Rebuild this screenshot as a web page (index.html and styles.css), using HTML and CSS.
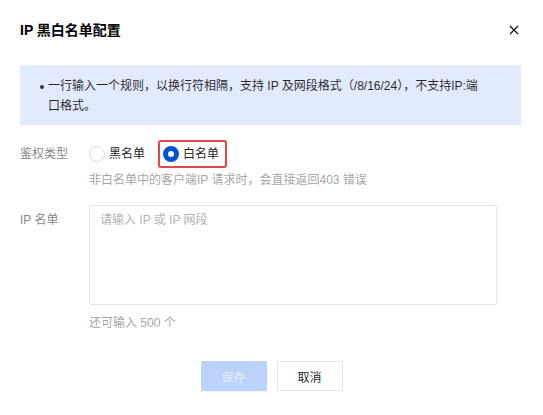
FILE: index.html
```html
<!DOCTYPE html>
<html lang="zh-CN">
<head>
<meta charset="utf-8">
<title>IP 黑白名单配置</title>
<link rel="stylesheet" href="styles.css">
</head>
<body>
<div class="dialog">
  <div class="dialog-header">
    <div class="dialog-title">IP 黑白名单配置</div>
    <button class="dialog-close" aria-label="关闭">
      <svg width="10" height="10" viewBox="0 0 10 10"><path d="M1 1L9 9M9 1L1 9" stroke="#1a1a1a" stroke-width="1.4" fill="none"/></svg>
    </button>
  </div>
  <div class="alert">
    <ul class="alert-list">
      <li>一行输入一个规则，以换行符相隔，支持 IP 及网段格式（/8/16/24），不支持IP:端口格式。</li>
    </ul>
  </div>
  <div class="form">
    <div class="form-item">
      <div class="form-label form-label-radio">鉴权类型</div>
      <div class="form-control">
        <div class="radio-group">
          <label class="radio"><span class="radio-dot"></span><span class="radio-text">黑名单</span></label>
          <label class="radio radio-checked highlight"><span class="radio-dot"></span><span class="radio-text">白名单</span></label>
        </div>
        <div class="help">非白名单中的客户端IP 请求时，会直接返回403 错误</div>
      </div>
    </div>
    <div class="form-item form-item-textarea">
      <div class="form-label form-label-text">IP 名单</div>
      <div class="form-control">
        <div class="textarea"><span class="placeholder">请输入 IP 或 IP 网段</span></div>
        <div class="help help-count">还可输入 500 个</div>
      </div>
    </div>
  </div>
  <div class="dialog-footer">
    <button class="btn btn-primary">保存</button>
    <button class="btn btn-default">取消</button>
  </div>
</div>
</body>
</html>
```

FILE: styles.css
```css
* { box-sizing: border-box; }
html, body { margin: 0; padding: 0; background: #fff; }
body {
  font-family: "Liberation Sans", "Noto Sans CJK SC", sans-serif;
  font-size: 12px;
  color: rgba(0,0,0,0.9);
}
.dialog {
  width: 543px;
  height: 415px;
  padding: 0 22px 0 20px;
}
.dialog-header {
  height: 60px;
  display: flex;
  align-items: center;
  justify-content: space-between;
}
.dialog-title {
  font-size: 14px;
  font-weight: bold;
  line-height: 20px;
  color: #000;
}
.dialog-close {
  border: 0;
  background: none;
  padding: 0;
  width: 10px;
  height: 10px;
  display: flex;
  margin-right: 2px;
}
.alert {
  margin-top: 5px;
  width: 501px;
  background: #e2eafd;
  padding: 11px 10px 9px 20px;
}
.alert-list {
  margin: 0;
  padding: 0 0 0 8px;
  width: 447px;
  list-style: none;
}
.alert-list li {
  position: relative;
  line-height: 20px;
  color: rgba(0,0,0,0.85);
  padding-left: 0;
}
.alert-list li::before {
  content: "";
  position: absolute;
  left: -8px;
  top: 9px;
  width: 4px;
  height: 4px;
  border-radius: 50%;
  background: #333;
}
.form {
  margin-top: 15px;
}
.form-item {
  display: flex;
}
.form-label {
  width: 69px;
  flex: none;
  color: #888;
}
.form-label-radio {
  line-height: 28px;
}
.form-label-text {
  line-height: 20px;
  padding-top: 5px;
}
.form-control {
  flex: 1;
}
.radio-group {
  display: flex;
  height: 28px;
  align-items: center;
  gap: 18px;
}
.radio {
  position: relative;
  display: flex;
  align-items: center;
  gap: 4px;
  line-height: 20px;
  color: rgba(0,0,0,0.9);
}
.radio-dot {
  width: 16px;
  height: 16px;
  border-radius: 50%;
  border: 1px solid #dcdcdc;
  background: #fff;
}
.radio-checked .radio-dot {
  border: 5px solid #0052d9;
}
.highlight::after {
  content: "";
  position: absolute;
  left: -5px;
  right: -8px;
  top: -4px;
  bottom: -4px;
  border: 2px solid #e54545;
  border-radius: 3px;
}
.help {
  color: #a6a6a6;
  line-height: 16px;
  margin-top: 4px;
}
.form-item-textarea {
  margin-top: 17px;
}
.textarea {
  width: 408px;
  height: 100px;
  border: 1px solid #e3e3ea;
  border-radius: 2px;
  padding: 4px 10px;
  line-height: 20px;
}
.placeholder {
  color: #b3b3b3;
}
.help-count {
  margin-top: 10px;
}
.dialog-footer {
  margin-top: 30px;
  display: flex;
  justify-content: center;
  gap: 10px;
  padding-left: 2px;
}
.btn {
  width: 66px;
  height: 30px;
  font-family: inherit;
  font-size: 12px;
  border-radius: 0;
  padding: 0;
}
.btn-primary {
  background: #bbd3fb;
  border: 0;
  color: #e8f0fe;
  box-shadow: 0 1px 0 #eef3fd;
}
.btn-default {
  background: #fff;
  border: 1px solid #e3e3ea;
  color: rgba(0,0,0,0.9);
}
```
